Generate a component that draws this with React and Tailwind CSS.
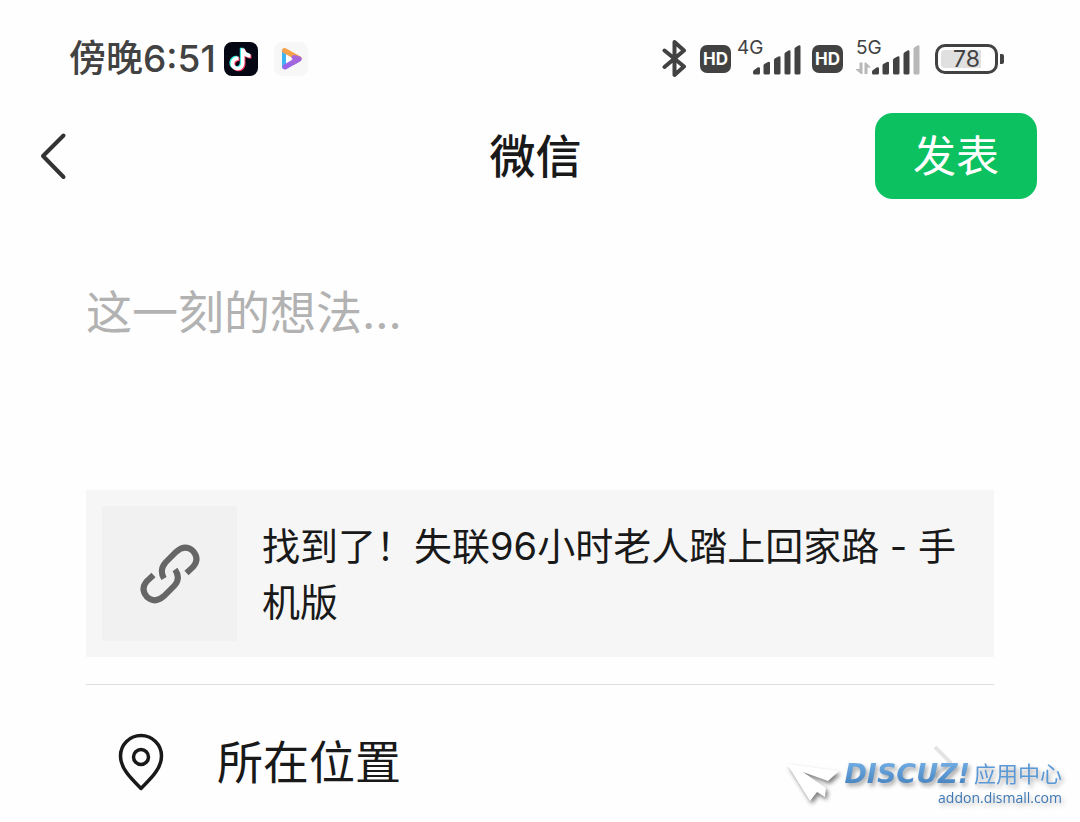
import React from "react";

function TikTokIcon() {
  const note =
    "M18 7h3.500c.5 3 2.500 5 6 5.500v3.700c-2.400 0-4.400-.7-6-1.900v7.700a7 7 0 1 1-6-7v3.800a3.300 3.300 0 1 0 2.500 3.200z";
  return (
    <svg className="size-[34px]" viewBox="0 0 34 34" aria-hidden="true">
      <rect width="34" height="34" rx="8" fill="#060714" />
      <g transform="translate(-1 -.5)">
        <path d={note} fill="#35e8e4" transform="translate(-1.200 -.7)" />
        <path d={note} fill="#f5305c" transform="translate(1 .9)" />
        <path d={note} fill="#fff" />
      </g>
    </svg>
  );
}

function VideoIcon() {
  return (
    <svg className="size-[34px]" viewBox="0 0 34 34" aria-hidden="true">
      <rect width="34" height="34" rx="8" fill="#f7f7f8" />
      <path d="M10 9v16" stroke="#3fb6f2" strokeWidth="4" strokeLinecap="round" />
      <path d="M11 25l14-8" stroke="#9a63e8" strokeWidth="5" strokeLinecap="round" />
      <path d="M10.500 8.500l14.500 8" stroke="#f5a04a" strokeWidth="5" strokeLinecap="round" />
      <path d="M20 15.500l5 1.500-6 3.500" fill="none" stroke="#a566dc" strokeWidth="5" strokeLinecap="round" strokeLinejoin="round" />
      <path d="M12 13v8l6.500-4.200z" fill="#fff" />
    </svg>
  );
}

function Bluetooth() {
  return (
    <svg className="h-10 w-[26px]" viewBox="0 0 26 40" fill="none" stroke="#424242" strokeWidth="4" strokeLinecap="round" strokeLinejoin="round" aria-hidden="true">
      <path d="M2.500 11.500L22 27.500 12.500 36V3L22 11.500 2.500 28" />
    </svg>
  );
}

function HdBadge() {
  return (
    <span className="flex h-7 w-[31px] items-center justify-center rounded-[7px] bg-[#424242] font-['Inter',sans-serif] text-[17px] leading-none font-bold text-white">
      HD
    </span>
  );
}

function Signal({ label, weak = false }) {
  return (
    <span className="relative block h-10 w-[65px]">
      <span className="absolute top-0 left-0 font-['Inter',sans-serif] text-[19px] leading-[18px] text-[#424242]">{label}</span>
      <svg className="absolute inset-0 h-full w-full" viewBox="0 0 65 40" fill="#424242" aria-hidden="true">
        {weak && (
          <g fill="#b8b8b8">
            <path d="M3.500 23.500h3V35H5L-1 30h4.500zM8.500 23.500H10l5 5h-3.500V35h-3z" />
          </g>
        )}
        <path d="M16 33q0-1 .8-1.700l3.700-2.800q2.500-1 2.500 1V34q0 1.500-1.500 1.500h-4Q16 35.500 16 34z" />
        <path d="M26.500 26.500q0-1 .8-1.500l3.700-2q2-.8 2 1v10q0 1.500-1.500 1.500H28q-1.500 0-1.500-1.500z" />
        <path d="M37 21q0-1 .8-1.500l3.700-2q2-.8 2 1V34q0 1.500-1.500 1.500h-3.500Q37 35.500 37 34z" />
        <path d="M47.500 15q0-1 .8-1.500l3.200-2q2-.8 2 1V34q0 1.500-1.500 1.500h-3q-1.500 0-1.500-1.500z" />
        <path d="M57.500 10q0-1 .8-1.500l3.200-2q2-.8 2 1V34q0 1.500-1.500 1.500h-3q-1.500 0-1.500-1.500z" fill={weak ? "#b8b8b8" : "#424242"} />
      </svg>
    </span>
  );
}

function Battery() {
  return (
    <span className="flex items-center gap-[2px]">
      <span className="flex h-[30px] w-[63px] rounded-[10px] border-[3px] border-[#424242] p-[3px]">
        <span className="flex flex-1 items-center justify-center rounded-[4px] bg-linear-to-r from-[#e0e0e0] from-78% to-white to-78% font-['Inter',sans-serif] text-[23px] leading-none text-[#424242]">
          78
        </span>
      </span>
      <span className="h-[10px] w-1 rounded-r-[2px] bg-[#424242]" />
    </span>
  );
}

function StatusBar() {
  return (
    <div className="flex h-[98px] items-center justify-between pt-5 pr-[76px] pl-[69px]">
      <div className="flex items-center">
        <span className="text-[37px] leading-10 font-medium text-[#424242]">傍晚6:51</span>
        <span className="ml-2 flex gap-4">
          <TikTokIcon />
          <VideoIcon />
        </span>
      </div>
      <div className="flex items-center">
        <Bluetooth />
        <span className="ml-3 flex items-center gap-[6px]">
          <HdBadge />
          <Signal label="4G" />
        </span>
        <span className="ml-[10px] flex items-center gap-[13px]">
          <HdBadge />
          <Signal label="5G" weak />
        </span>
        <span className="ml-[14px]">
          <Battery />
        </span>
      </div>
    </div>
  );
}

function Watermark() {
  return (
    <div className="pointer-events-none absolute right-[18px] bottom-4 flex items-start gap-1">
      <svg className="mt-1 h-[42px] w-[54px] overflow-visible drop-shadow-[2px_3px_2px_rgba(0,0,0,0.5)]" viewBox="0 0 54 42" aria-hidden="true">
        <path d="M1 2L53 9 42 19 17 10 40 26 39 35 31 30 24 39z" fill="#fff" />
      </svg>
      <div className="flex flex-col items-end">
        <div className="flex items-center gap-1 drop-shadow-[2px_3px_2px_rgba(0,0,0,0.35)]">
          <span className="bg-linear-to-b from-[#79b5ea] to-[#3d79b8] bg-clip-text font-['DejaVu_Sans',sans-serif] text-[27px] leading-8 font-bold text-transparent italic">
            DISCUZ!
          </span>
          <span className="text-[22px] leading-8 text-[#5a99d6]">应用中心</span>
        </div>
        <span className="font-['Open_Sans','Noto_Sans',sans-serif] text-[14px] leading-4 text-[#3d78b4] drop-shadow-[2px_3px_2px_rgba(0,0,0,0.25)]">
          addon.dismall.com
        </span>
      </div>
    </div>
  );
}

export default function App() {
  return (
    <main className="relative min-h-screen bg-[#fefefe] font-['Inter','Noto_Sans_CJK_SC',sans-serif] text-[#191919]">
      <StatusBar />
      <header className="grid h-[116px] grid-cols-[1fr_auto_1fr] items-center pr-[43px] pl-[38px]">
        <button type="button" aria-label="返回" className="justify-self-start">
          <svg className="h-[50px] w-[30px]" viewBox="0 0 30 50" fill="none" stroke="#333" strokeWidth="4" strokeLinecap="round" strokeLinejoin="round" aria-hidden="true">
            <path d="M25.500 4.500L5 25l20.500 21" />
          </svg>
        </button>
        <h1 className="pr-1 text-[46px] leading-[56px] font-medium">微信</h1>
        <button type="button" className="h-[86px] w-[162px] justify-self-end rounded-[18px] bg-[#0bc160] text-[43px] leading-[56px] text-white">
          发表
        </button>
      </header>
      <div className="px-[86px] pt-[70px]">
        <textarea
          aria-label="这一刻的想法"
          placeholder="这一刻的想法..."
          className="block h-[206px] w-full resize-none text-[46px] leading-[56px] outline-none placeholder:text-[#b2b2b2]"
        />
        <a href="#link" className="flex items-center gap-[25px] bg-[#f6f6f6] p-4">
          <span className="flex size-[135px] shrink-0 items-center justify-center bg-[#f1f1f1]">
            <svg className="size-[60px]" viewBox="0 0 60 60" fill="none" stroke="#666" strokeWidth="6" aria-hidden="true">
              <path d="M24 34.500Q19 26 25.500 18.500L36 8Q45 0 53 7Q60 15 53 23L46.500 29" />
              <path d="M35 25.500Q41 34 34.500 41.500L24 52Q15 60 7 53Q0 45 7 37L13.500 31" />
            </svg>
          </span>
          <span className="text-[38px] leading-[56px]">找到了！失联96小时老人踏上回家路 - 手机版</span>
        </a>
        <div className="mt-[27px] border-t border-[#e0e0e0]">
          <button type="button" className="flex h-[137px] w-full items-center pt-4 pr-[42px] pl-8 text-left">
            <svg className="h-[58px] w-[46px]" viewBox="0 0 46 58" fill="none" stroke="#191919" strokeWidth="3.500" strokeLinejoin="round" aria-hidden="true">
              <path d="M23 55.500C16 48 2.500 37 2.500 23a20.500 20.500 0 0 1 41 0C43.500 37 30 48 23 55.500z" />
              <circle cx="23" cy="24" r="7.500" />
            </svg>
            <span className="ml-[53px] flex-1 text-[46px] leading-[56px]">所在位置</span>
            <svg className="h-8 w-[18px]" viewBox="0 0 18 32" fill="none" stroke="#e4e4e4" strokeWidth="4" aria-hidden="true">
              <path d="M1 1l15 15L1 31" />
            </svg>
          </button>
        </div>
      </div>
      <Watermark />
    </main>
  );
}
